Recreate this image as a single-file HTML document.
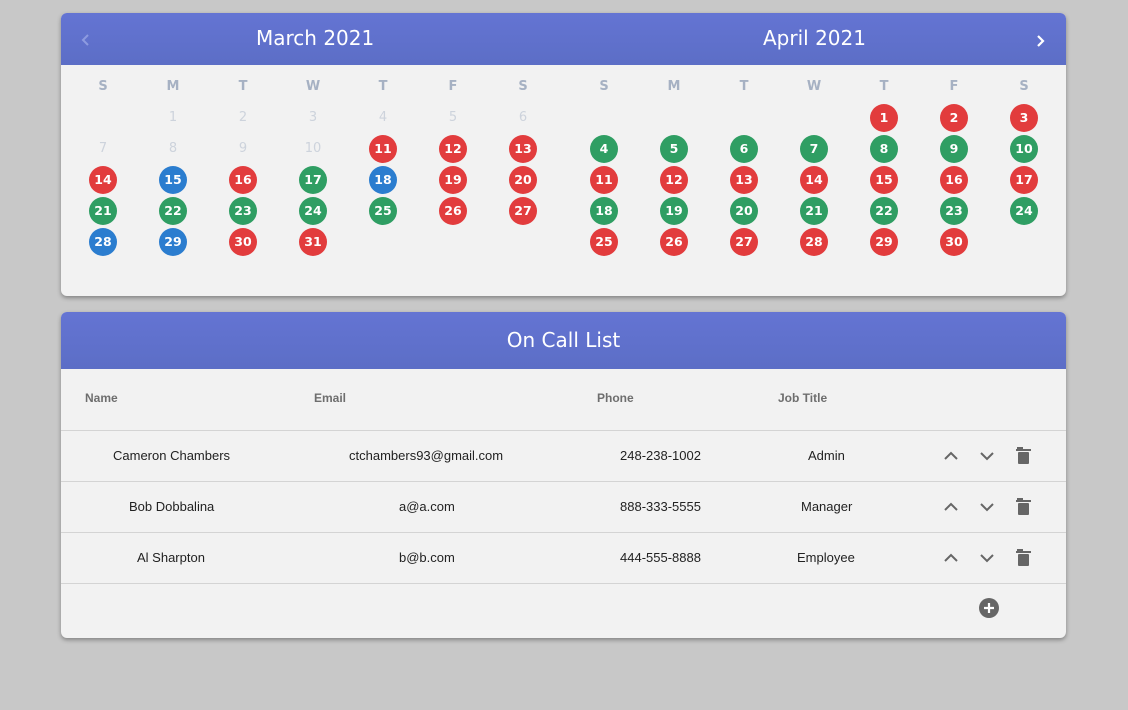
<!DOCTYPE html>
<html><head><style>
body{margin:0;background:#c8c8c8;width:1128px;height:710px;position:relative;font-family:"Liberation Sans",sans-serif;overflow:hidden}
.card{position:absolute;left:61px;width:1005px;background:#f2f2f2;border-radius:6px;box-shadow:0 2px 4px rgba(0,0,0,.35);overflow:hidden}
.hd{background:linear-gradient(#6474d3,#5c6ec6);color:#fff;position:relative}
.grid{position:absolute;display:grid;grid-template-columns:repeat(7,70px);grid-auto-rows:31px;font-family:"DejaVu Sans",sans-serif}
.grid div{display:flex;align-items:center;justify-content:center;font-size:13px;color:#cdd3dc}
.grid .w{color:#a6b1c3;font-weight:bold;font-size:13px}
.grid span{width:28px;height:28px;border-radius:50%;color:#fff;font-weight:bold;display:flex;align-items:center;justify-content:center;font-size:12.5px}
.r{background:#e23c3d}.g{background:#2f9e63}.b{background:#2b7dcf}
.t{position:absolute;font-size:13px;color:#222}
.th{position:absolute;font-size:12px;color:#6e6e6e;font-weight:bold;top:391px}
.line{position:absolute;left:0;width:1005px;height:1px;background:#d4d4d4}
.ic{position:absolute}
</style></head><body>
<div class="card" style="top:13px;height:283px">
 <div class="hd" style="height:52px">
  <div style="position:absolute;left:195px;top:13px;font-size:20px;font-family:'DejaVu Sans',sans-serif">March 2021</div>
  <div style="position:absolute;left:702px;top:13px;font-size:20px;font-family:'DejaVu Sans',sans-serif">April 2021</div>
  <svg style="position:absolute;left:19px;top:20px" width="12" height="14"><path d="M8 2L3 7L8 12" stroke="#8d9be0" stroke-width="2" fill="none"/></svg>
  <svg style="position:absolute;left:974px;top:21px" width="12" height="14"><path d="M3 2L8 7L3 12" stroke="#fff" stroke-width="2.2" fill="none"/></svg>
 </div>
</div>
<div class="grid" style="left:68px;top:71px">
<div class="w">S</div><div class="w">M</div><div class="w">T</div><div class="w">W</div><div class="w">T</div><div class="w">F</div><div class="w">S</div>
<div></div><div>1</div><div>2</div><div>3</div><div>4</div><div>5</div><div>6</div>
<div>7</div><div>8</div><div>9</div><div>10</div><div><span class="r">11</span></div><div><span class="r">12</span></div><div><span class="r">13</span></div>
<div><span class="r">14</span></div><div><span class="b">15</span></div><div><span class="r">16</span></div><div><span class="g">17</span></div><div><span class="b">18</span></div><div><span class="r">19</span></div><div><span class="r">20</span></div>
<div><span class="g">21</span></div><div><span class="g">22</span></div><div><span class="g">23</span></div><div><span class="g">24</span></div><div><span class="g">25</span></div><div><span class="r">26</span></div><div><span class="r">27</span></div>
<div><span class="b">28</span></div><div><span class="b">29</span></div><div><span class="r">30</span></div><div><span class="r">31</span></div>
</div>
<div class="grid" style="left:569px;top:71px">
<div class="w">S</div><div class="w">M</div><div class="w">T</div><div class="w">W</div><div class="w">T</div><div class="w">F</div><div class="w">S</div>
<div></div><div></div><div></div><div></div><div><span class="r">1</span></div><div><span class="r">2</span></div><div><span class="r">3</span></div>
<div><span class="g">4</span></div><div><span class="g">5</span></div><div><span class="g">6</span></div><div><span class="g">7</span></div><div><span class="g">8</span></div><div><span class="g">9</span></div><div><span class="g">10</span></div>
<div><span class="r">11</span></div><div><span class="r">12</span></div><div><span class="r">13</span></div><div><span class="r">14</span></div><div><span class="r">15</span></div><div><span class="r">16</span></div><div><span class="r">17</span></div>
<div><span class="g">18</span></div><div><span class="g">19</span></div><div><span class="g">20</span></div><div><span class="g">21</span></div><div><span class="g">22</span></div><div><span class="g">23</span></div><div><span class="g">24</span></div>
<div><span class="r">25</span></div><div><span class="r">26</span></div><div><span class="r">27</span></div><div><span class="r">28</span></div><div><span class="r">29</span></div><div><span class="r">30</span></div>
</div>

<div class="card" style="top:312px;height:326px">
 <div class="hd" style="height:57px;text-align:center;line-height:57px;font-size:20px;font-family:'DejaVu Sans',sans-serif">On Call List</div>
 <div class="line" style="top:118px"></div>
 <div class="line" style="top:169px"></div>
 <div class="line" style="top:220px"></div>
 <div class="line" style="top:271px"></div>
</div>
<div class="th" style="left:85px">Name</div>
<div class="th" style="left:314px">Email</div>
<div class="th" style="left:597px">Phone</div>
<div class="th" style="left:778px">Job Title</div>

<div class="t" style="left:113px;top:448px">Cameron Chambers</div>
<div class="t" style="left:349px;top:448px">ctchambers93@gmail.com</div>
<div class="t" style="left:620px;top:448px">248-238-1002</div>
<div class="t" style="left:808px;top:448px">Admin</div>

<div class="t" style="left:129px;top:499px">Bob Dobbalina</div>
<div class="t" style="left:399px;top:499px">a@a.com</div>
<div class="t" style="left:620px;top:499px">888-333-5555</div>
<div class="t" style="left:801px;top:499px">Manager</div>

<div class="t" style="left:137px;top:550px">Al Sharpton</div>
<div class="t" style="left:399px;top:550px">b@b.com</div>
<div class="t" style="left:620px;top:550px">444-555-8888</div>
<div class="t" style="left:797px;top:550px">Employee</div>

<svg class="ic" style="left:940px;top:445px" width="100" height="130">
 <g stroke="#666" stroke-width="2" fill="none">
  <path d="M5 14L11 8L17 14"/><path d="M41 8L47 14L53 8"/>
  <path d="M5 65L11 59L17 65"/><path d="M41 59L47 65L53 59"/>
  <path d="M5 116L11 110L17 116"/><path d="M41 110L47 116L53 110"/>
 </g>
 <g fill="#666">
  <rect x="77" y="2" width="6" height="2"/><rect x="76" y="4" width="15" height="2"/><rect x="78" y="7" width="11" height="12" rx="1"/>
  <rect x="77" y="53" width="6" height="2"/><rect x="76" y="55" width="15" height="2"/><rect x="78" y="58" width="11" height="12" rx="1"/>
  <rect x="77" y="104" width="6" height="2"/><rect x="76" y="106" width="15" height="2"/><rect x="78" y="109" width="11" height="12" rx="1"/>
 </g>
</svg>
<svg class="ic" style="left:979px;top:598px" width="20" height="20">
 <circle cx="10" cy="10" r="10" fill="#666"/><path d="M10 5V15M5 10H15" stroke="#fff" stroke-width="2.2"/>
</svg>
</body></html>
